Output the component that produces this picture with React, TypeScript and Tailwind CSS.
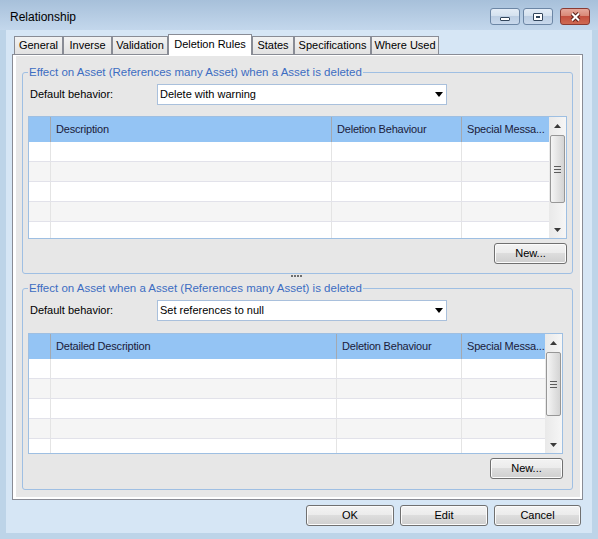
import clsx from "clsx";

type Col = { label: string; cls: string };

const grid1Cols: Col[] = [
  { label: "Description", cls: "w-[281px]" },
  { label: "Deletion Behaviour", cls: "w-[130px]" },
  { label: "Special Messa...", cls: "w-[88px]" },
];

const grid2Cols: Col[] = [
  { label: "Detailed Description", cls: "w-[286px]" },
  { label: "Deletion Behaviour", cls: "w-[125px]" },
  { label: "Special Messa...", cls: "w-[84px]" },
];

const tabs = [
  { label: "General", cls: "w-[49px]" },
  { label: "Inverse", cls: "w-[49px]" },
  { label: "Validation", cls: "w-[56px]" },
  { label: "Deletion Rules", cls: "w-[84px]", active: true },
  { label: "States", cls: "w-[42px]" },
  { label: "Specifications", cls: "w-[77px]" },
  { label: "Where Used", cls: "w-[68px]" },
];

const Arrow = ({ up, color = "#3a3a3a" }: { up?: boolean; color?: string }) => (
  <svg width="7" height="4" viewBox="0 0 7 4" className={clsx(up && "rotate-180")}>
    <path d="M0 0h7L3.5 4z" fill={color} />
  </svg>
);

const Scrollbar = ({ thumb }: { thumb: string }) => (
  <div className="flex w-[17px] shrink-0 flex-col bg-[linear-gradient(90deg,#e9e9e9,#f6f6f6)]">
    <div className="flex h-[18px] shrink-0 items-center justify-center">
      <Arrow up />
    </div>
    <div
      className={clsx(
        "mx-[1px] flex shrink-0 flex-col items-center justify-center gap-[2px] rounded-[2px] border border-[#979797] bg-[linear-gradient(90deg,#f5f5f5,#e4e4e4_50%,#d4d4d4)]",
        thumb
      )}
    >
      <div className="h-px w-[7px] bg-[#5c5c5c]" />
      <div className="h-px w-[7px] bg-[#5c5c5c]" />
      <div className="h-px w-[7px] bg-[#5c5c5c]" />
    </div>
    <div className="flex-1" />
    <div className="flex h-[17px] shrink-0 items-center justify-center">
      <Arrow />
    </div>
  </div>
);

const Grid = ({ cols, cls, thumb }: { cols: Col[]; cls: string; thumb: string }) => (
  <div className={clsx("flex overflow-hidden border border-[#9ebfe2] bg-white", cls)}>
    <div className="flex flex-1 flex-col overflow-hidden">
      <div className="flex h-[25px] shrink-0 bg-[#94c4f4] text-[#1b1b3a]">
        <div className="w-[21px] shrink-0" />
        {cols.map((c) => (
          <div
            key={c.label}
            className={clsx(
              "flex shrink-0 items-center overflow-hidden whitespace-nowrap border-l border-[#a4a9b0] pl-[5px] tracking-[-0.2px]",
              c.cls
            )}
          >
            {c.label}
          </div>
        ))}
      </div>
      {[0, 1, 2, 3, 4].map((i) => (
        <div
          key={i}
          className={clsx(
            "flex h-[20px] shrink-0 border-b border-[#e2e2ea]",
            i % 2 ? "bg-[#f5f5f5]" : "bg-white"
          )}
        >
          <div className="w-[21px] shrink-0" />
          {cols.map((c) => (
            <div key={c.label} className={clsx("shrink-0 border-l border-[#e4e4e4]", c.cls)} />
          ))}
        </div>
      ))}
    </div>
    <Scrollbar thumb={thumb} />
  </div>
);

const Button = ({ children, cls }: { children: React.ReactNode; cls: string }) => (
  <div
    className={clsx(
      "flex h-[21px] shrink-0 items-center justify-center rounded-[3px] border border-[#707070] bg-[linear-gradient(#f3f3f3_0%,#ebebeb_50%,#dddddd_50%,#cfcfcf_100%)] text-black shadow-[inset_0_0_0_1px_#fbfbfb]",
      cls
    )}
  >
    {children}
  </div>
);

const Combo = ({ value }: { value: string }) => (
  <div className="flex h-[21px] w-[290px] items-center justify-between border border-[#a9c0dc] bg-white pl-[2px] pr-[3px] text-black">
    <span>{value}</span>
    <svg width="8" height="5" viewBox="0 0 8 5">
      <path d="M0 0h8L4 5z" fill="#000" />
    </svg>
  </div>
);

const GroupBox = ({
  legend,
  value,
  cols,
  gridCls,
  thumb,
  padCls,
  gapCls,
}: {
  legend: string;
  value: string;
  cols: Col[];
  gridCls: string;
  thumb: string;
  padCls: string;
  gapCls: string;
}) => (
  <div className="relative flex h-[202px] w-[551px] flex-col rounded-[3px] border border-[#9fbfe3]">
    <span className="absolute -top-[9px] left-[5px] bg-[#e7e7e7] px-[1px] text-[11.5px] leading-[16px] text-[#3d6dc2]">
      {legend}
    </span>
    <div className="mt-[11px] flex items-center pl-[7px]">
      <span className="w-[127px] text-black">Default behavior:</span>
      <Combo value={value} />
    </div>
    <div className={clsx("pl-[5px]", gapCls)}>
      <Grid cols={cols} cls={gridCls} thumb={thumb} />
    </div>
    <div className={clsx("mt-[4px] flex justify-end", padCls)}>
      <Button cls="w-[73px]">New...</Button>
    </div>
  </div>
);

const CaptionButton = ({ children, close }: { children: React.ReactNode; close?: boolean }) => (
  <div
    className={clsx(
      "flex h-[17px] w-[30px] items-center justify-center rounded-[3px] border",
      close
        ? "border-[#8a3b33] bg-[linear-gradient(#e6a89c_0%,#d88673_50%,#c4503f_50%,#cf6a52_100%)]"
        : "border-[#6c86a5] bg-[linear-gradient(#e3ecf6_0%,#d3e0ee_50%,#bccee3_50%,#c9d9ec_100%)]"
    )}
  >
    {children}
  </div>
);

export default function App() {
  return (
    <div className="flex h-[539px] w-[598px] flex-col bg-[#bdd4e8] font-['Segoe_UI','Liberation_Sans',sans-serif] text-[11px]">
      {/* title bar */}
      <div className="flex h-[30px] shrink-0 items-start justify-between bg-[linear-gradient(#a7c0da,#c3d7ec)] pl-[10px] pr-[8px]">
        <span className="mt-[9px] text-[12px] leading-[16px] text-black">Relationship</span>
        <div className="mt-[8px] flex gap-[3px]">
          <CaptionButton>
            <div className="mt-[5px] h-[4px] w-[10px] rounded-[1px] border border-[#33465c] bg-white" />
          </CaptionButton>
          <CaptionButton>
            <div className="h-[8px] w-[10px] rounded-[1px] border border-[#33465c] bg-white p-[2px]">
              <div className="h-full w-full border border-[#33465c]" />
            </div>
          </CaptionButton>
          <div className="w-px" />
          <CaptionButton close>
            <svg width="13" height="10" viewBox="0 0 13 10">
              <path d="M3 1.5l7 7M10 1.5l-7 7" stroke="#5a1f18" strokeWidth="4" />
              <path d="M3 1.5l7 7M10 1.5l-7 7" stroke="#fff" strokeWidth="2" />
            </svg>
          </CaptionButton>
        </div>
      </div>

      {/* client */}
      <div className="mx-[6px] mb-[6px] flex flex-1 flex-col bg-[#d6e6f5] pl-[6px] pr-[11px] pt-[4px]">
        <div className="flex h-[20px] items-end pl-[2px]">
          {tabs.map((t) => (
            <div
              key={t.label}
              className={clsx(
                "flex shrink-0 items-center justify-center whitespace-nowrap border-x border-t border-[#898c95] text-black",
                t.cls,
                t.active
                  ? "relative z-10 -mb-px h-[21px] bg-white pb-[2px]"
                  : "h-[18px] bg-[linear-gradient(#f2f2f2,#e2e2e2)]"
              )}
            >
              {t.label}
            </div>
          ))}
        </div>

        <div className="h-[446px] w-[571px] border border-[#898c95]">
          <div className="flex h-full flex-col border-b-[2px] border-l-[3px] border-r-[2px] border-t border-white bg-[#e7e7e7] pl-[6px]">
            <div className="mt-[16px]">
              <GroupBox
                legend="Effect on Asset (References many Asset) when a Asset is deleted"
                value="Delete with warning"
                cols={grid1Cols}
                gridCls="h-[123px] w-[539px]"
                thumb="h-[68px]"
                padCls="pr-[5px]"
                gapCls="mt-[11px]"
              />
            </div>
            <div className="flex h-[14px] items-start justify-center gap-[1px] pt-[1px] pr-[10px]">
              <div className="h-[2px] w-[2px] bg-[#6f6f6f]" />
              <div className="h-[2px] w-[2px] bg-[#6f6f6f]" />
              <div className="h-[2px] w-[2px] bg-[#6f6f6f]" />
              <div className="h-[2px] w-[2px] bg-[#6f6f6f]" />
            </div>
            <GroupBox
              legend="Effect on Asset when a Asset (References many Asset) is deleted"
              value="Set references to null"
              cols={grid2Cols}
              gridCls="h-[121px] w-[535px]"
              thumb="h-[64px]"
              padCls="pr-[9px]"
              gapCls="mt-[12px]"
            />
          </div>
        </div>

        <div className="mt-[5px] flex justify-end gap-[6px]">
          <Button cls="w-[88px]">OK</Button>
          <Button cls="w-[88px]">Edit</Button>
          <Button cls="w-[87px]">Cancel</Button>
        </div>
      </div>
    </div>
  );
}
